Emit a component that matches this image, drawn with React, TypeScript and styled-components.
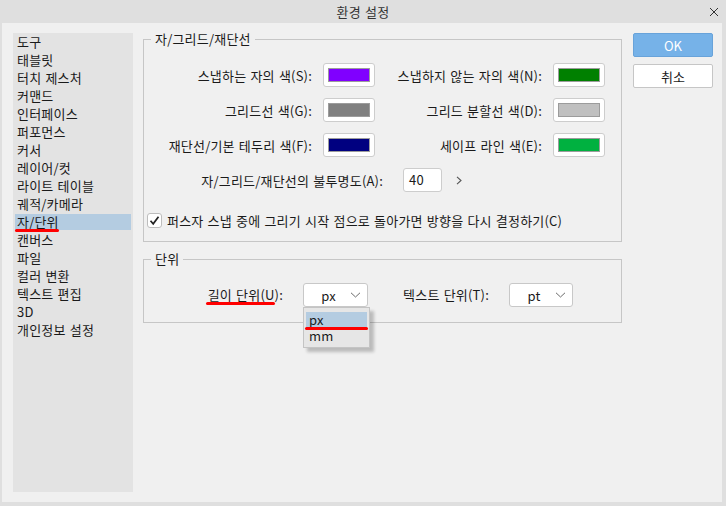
import styled, { createGlobalStyle } from "styled-components";

const GlobalStyle = createGlobalStyle`
  html, body {
    margin: 0;
    padding: 0;
    background: #dfdfdf;
  }
  * {
    box-sizing: border-box;
  }
`;

const MARK_RED = "#ff0000";

const Window = styled.div`
  width: 726px;
  height: 506px;
  display: flex;
  flex-direction: column;
  background: #dfdfdf;
  padding: 0 4px 4px 2px;
  font-family: "Noto Sans CJK KR", "Noto Sans", sans-serif;
  font-size: 13px;
  letter-spacing: 0.2px;
  word-spacing: 1px;
  color: #1a1a1a;
`;

const TitleBar = styled.div`
  height: 23px;
  margin: 0 -4px 0 -2px;
  display: grid;
  grid-template-columns: 1fr auto 1fr;
  align-items: center;
  color: #333;
`;

const Title = styled.div`
  grid-column: 2;
  line-height: 23px;
`;

const CloseButton = styled.button`
  grid-column: 3;
  justify-self: end;
  width: 10px;
  height: 10px;
  margin-right: 7px;
  padding: 0;
  border: none;
  background: none;
  display: flex;
`;

const Body = styled.div`
  flex: 1;
  display: flex;
  align-items: flex-start;
  background: #f0f0f0;
  padding: 8px 9px 10px 11px;
`;

const Sidebar = styled.ul`
  list-style: none;
  width: 120px;
  align-self: stretch;
  margin: 2px 0 0 0;
  padding: 1px 0 0;
  background: #e3e3e3;
`;

const SideItem = styled.li<{ $active?: boolean }>`
  height: 16px;
  margin: 0 2px 2px;
  padding-left: 2px;
  line-height: 16px;
  white-space: nowrap;
  background: ${(p) => (p.$active ? "#b4cce1" : "transparent")};
`;

const Marked = styled.span<{ $left?: number; $right?: number; $bottom?: number }>`
  position: relative;
  &::after {
    content: "";
    position: absolute;
    left: ${(p) => p.$left ?? -2}px;
    right: ${(p) => p.$right ?? 0}px;
    bottom: ${(p) => p.$bottom ?? -2}px;
    height: 3px;
    border-radius: 2px;
    background: ${MARK_RED};
  }
`;

const Main = styled.div`
  width: 479px;
  margin-left: 10px;
  display: flex;
  flex-direction: column;
`;

const Group = styled.fieldset<{ $top?: number; $bottom?: number }>`
  margin: 0;
  min-width: 0;
  border: 1px solid #c6c6c6;
  padding: ${(p) => p.$top ?? 16}px 16px ${(p) => p.$bottom ?? 13}px 0;
  & + & {
    margin-top: 9px;
  }
`;

const Legend = styled.legend`
  margin-left: 7px;
  padding: 0 4px;
  line-height: 16px;
`;

const ColorGrid = styled.div`
  display: grid;
  grid-template-columns: 179px 52px 178px 52px;
  grid-auto-rows: 24px;
  row-gap: 11px;
  align-items: center;
`;

const FieldLabel = styled.div`
  text-align: right;
  padding-right: 11px;
  white-space: nowrap;
`;

const SwatchButton = styled.button`
  width: 52px;
  height: 24px;
  padding: 0;
  border: 1px solid #cdcdcd;
  border-radius: 3px;
  background: #fff;
  display: flex;
  align-items: center;
  justify-content: center;
`;

const Swatch = styled.span<{ $color: string }>`
  width: 42px;
  height: 14px;
  border: 1px solid #9c9c9c;
  background: ${(p) => p.$color};
`;

const OpacityRow = styled.div`
  height: 24px;
  margin-top: 11px;
  display: flex;
  align-items: center;
`;

const OpacityLabel = styled.div`
  width: 239px;
  text-align: right;
  white-space: nowrap;
`;

const NumberBox = styled.div`
  width: 39px;
  height: 24px;
  margin-left: 20px;
  padding-left: 5px;
  border: 1px solid #cdcdcd;
  border-radius: 3px;
  background: #fff;
  line-height: 22px;
`;

const StepArrow = styled.span`
  margin-left: 14px;
  display: flex;
`;

const CheckRow = styled.label`
  height: 15px;
  margin-top: 21px;
  padding-left: 3px;
  display: flex;
  align-items: center;
  gap: 5px;
  white-space: nowrap;
`;

const CheckBox = styled.span`
  width: 15px;
  height: 15px;
  border: 1px solid #bdbdbd;
  border-radius: 3px;
  background: #fff;
  display: flex;
  align-items: center;
  justify-content: center;
`;

const UnitGrid = styled.div`
  display: grid;
  grid-template-columns: 139px 65px 101px 64px;
  column-gap: 20px;
  align-items: center;
`;

const UnitLabel = styled.div`
  text-align: right;
  white-space: nowrap;
  line-height: 16px;
`;

const Select = styled.div`
  position: relative;
  height: 24px;
  border: 1px solid #c8c8c8;
  border-radius: 3px;
  background: #fff;
  display: flex;
  align-items: center;
`;

const SelectValue = styled.span`
  flex: 1;
  text-align: center;
  padding-left: 6px;
`;

const SelectArrow = styled.span`
  width: 20px;
  display: flex;
  justify-content: center;
  padding-right: 4px;
`;

const Popup = styled.ul`
  position: absolute;
  top: 23px;
  left: -1px;
  width: 67px;
  margin: 0;
  padding: 4px 2px 3px;
  list-style: none;
  background: #e6e6e6;
  border: 1px solid #c4c4c4;
  box-shadow: 4px 4px 3px rgba(0, 0, 0, 0.22);
`;

const Option = styled.li<{ $active?: boolean }>`
  position: relative;
  height: 16px;
  line-height: 16px;
  padding-left: 3px;
  background: ${(p) => (p.$active ? "#b4cce1" : "transparent")};
  ${(p) =>
    p.$active &&
    `
    &::after {
      content: "";
      position: absolute;
      left: -1px;
      right: -1px;
      bottom: -2px;
      height: 3px;
      border-radius: 2px;
      background: ${MARK_RED};
    }
  `}
`;

const Buttons = styled.div`
  width: 80px;
  margin: 2px 0 0 11px;
  display: flex;
  flex-direction: column;
  gap: 7px;
`;

const DialogButton = styled.button<{ $primary?: boolean }>`
  height: 24px;
  padding: 0;
  border-radius: 2px;
  font-family: inherit;
  font-size: 13px;
  border: 1px solid ${(p) => (p.$primary ? "#68a3da" : "#c6c6c6")};
  background: ${(p) => (p.$primary ? "#76b2e8" : "#fff")};
  color: ${(p) => (p.$primary ? "#fff" : "#1a1a1a")};
`;

const sideItems = [
  "도구",
  "태블릿",
  "터치 제스처",
  "커맨드",
  "인터페이스",
  "퍼포먼스",
  "커서",
  "레이어/컷",
  "라이트 테이블",
  "궤적/카메라",
  "자/단위",
  "캔버스",
  "파일",
  "컬러 변환",
  "텍스트 편집",
  "3D",
  "개인정보 설정",
];

const colorRows = [
  ["스냅하는 자의 색(S):", "#8000ff", "스냅하지 않는 자의 색(N):", "#008000"],
  ["그리드선 색(G):", "#808080", "그리드 분할선 색(D):", "#c0c0c0"],
  ["재단선/기본 테두리 색(F):", "#000080", "세이프 라인 색(E):", "#00b140"],
];

const ChevronDown = () => (
  <svg width="11" height="6" viewBox="0 0 11 6">
    <path d="M1 0.8 L5.5 5 L10 0.8" fill="none" stroke="#6b6b6b" strokeWidth="1" />
  </svg>
);

export default function App() {
  return (
    <>
      <GlobalStyle />
      <Window>
        <TitleBar>
          <Title>환경 설정</Title>
          <CloseButton aria-label="닫기">
            <svg width="10" height="10" viewBox="0 0 10 10">
              <path d="M1 1 L9 9 M9 1 L1 9" stroke="#333" strokeWidth="1" />
            </svg>
          </CloseButton>
        </TitleBar>
        <Body>
          <Sidebar>
            {sideItems.map((item) => (
              <SideItem key={item} $active={item === "자/단위"}>
                {item === "자/단위" ? <Marked $bottom={-1}>{item}</Marked> : item}
              </SideItem>
            ))}
          </Sidebar>

          <Main>
            <Group>
              <Legend>자/그리드/재단선</Legend>
              <ColorGrid>
                {colorRows.map(([l1, c1, l2, c2]) => (
                  <>
                    <FieldLabel key={l1}>{l1}</FieldLabel>
                    <SwatchButton key={c1 + l1}>
                      <Swatch $color={c1} />
                    </SwatchButton>
                    <FieldLabel key={l2}>{l2}</FieldLabel>
                    <SwatchButton key={c2 + l2}>
                      <Swatch $color={c2} />
                    </SwatchButton>
                  </>
                ))}
              </ColorGrid>
              <OpacityRow>
                <OpacityLabel>자/그리드/재단선의 불투명도(A):</OpacityLabel>
                <NumberBox>40</NumberBox>
                <StepArrow>
                  <svg width="6" height="9" viewBox="0 0 6 9">
                    <path d="M1 0.8 L5 4.5 L1 8.2" fill="none" stroke="#555" strokeWidth="1.1" />
                  </svg>
                </StepArrow>
              </OpacityRow>
              <CheckRow>
                <CheckBox>
                  <svg width="11" height="11" viewBox="0 0 11 11">
                    <path d="M1.5 5.8 L4.2 8.8 L9.5 1.8" fill="none" stroke="#222" strokeWidth="1.7" />
                  </svg>
                </CheckBox>
                퍼스자 스냅 중에 그리기 시작 점으로 돌아가면 방향을 다시 결정하기(C)
              </CheckRow>
            </Group>

            <Group $bottom={15}>
              <Legend>단위</Legend>
              <UnitGrid>
                <UnitLabel>
                  <Marked $bottom={-1} $right={4}>
                    길이 단위(U)
                  </Marked>
                  :
                </UnitLabel>
                <Select>
                  <SelectValue>px</SelectValue>
                  <SelectArrow>
                    <ChevronDown />
                  </SelectArrow>
                  <Popup>
                    <Option $active>px</Option>
                    <Option>mm</Option>
                  </Popup>
                </Select>
                <UnitLabel>텍스트 단위(T):</UnitLabel>
                <Select>
                  <SelectValue>pt</SelectValue>
                  <SelectArrow>
                    <ChevronDown />
                  </SelectArrow>
                </Select>
              </UnitGrid>
            </Group>
          </Main>

          <Buttons>
            <DialogButton $primary>OK</DialogButton>
            <DialogButton>취소</DialogButton>
          </Buttons>
        </Body>
      </Window>
    </>
  );
}
